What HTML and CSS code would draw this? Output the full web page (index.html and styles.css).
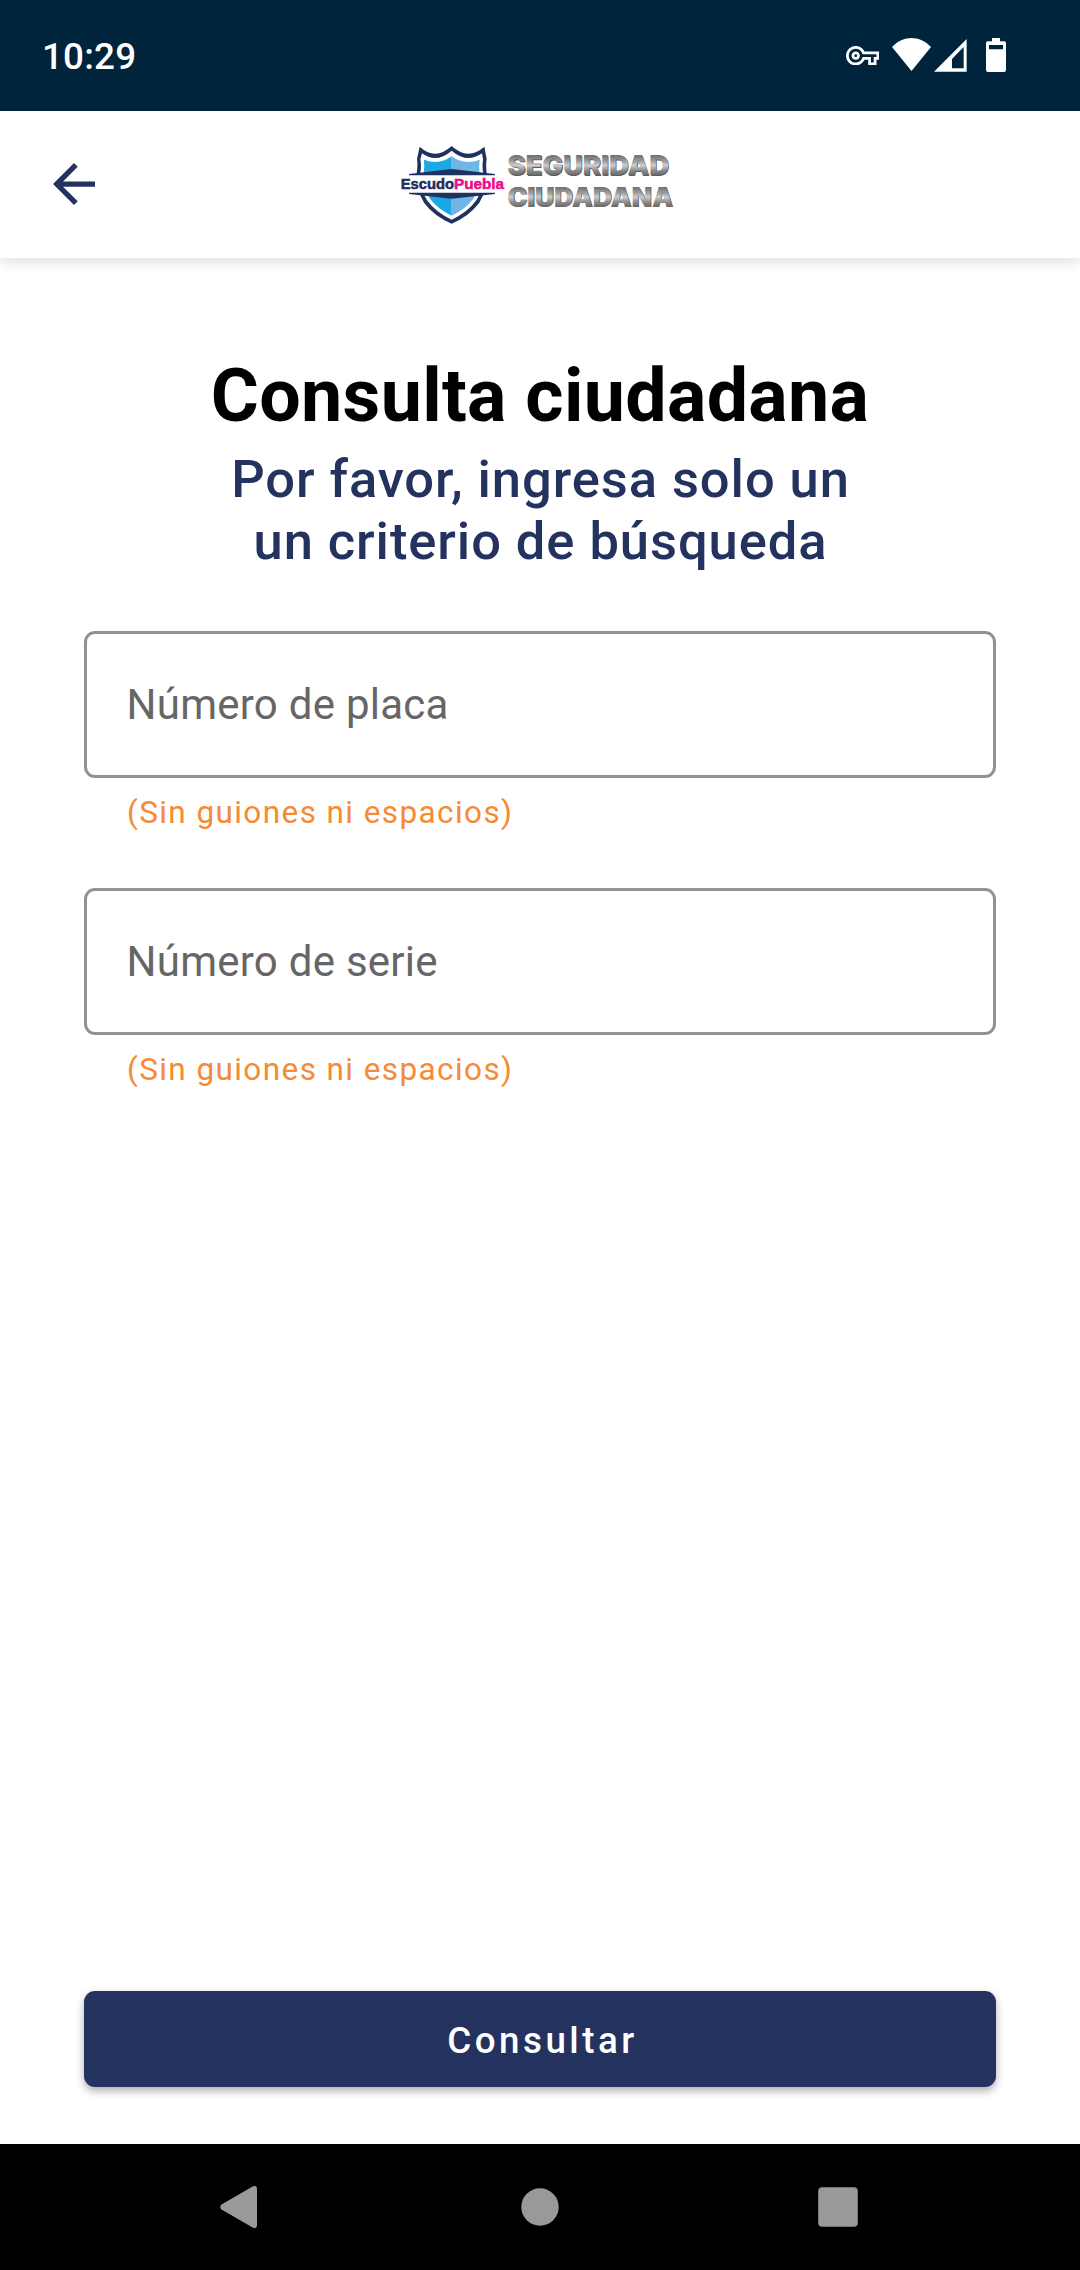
FILE: index.html
```html
<!DOCTYPE html>
<html lang="es">
<head>
<meta charset="utf-8">
<title>Consulta ciudadana</title>
<link rel="stylesheet" href="styles.css">
</head>
<body>
<div class="status-bar">
  <span class="clock">10:29</span>
  <div class="status-icons">
    <svg class="icon-key" viewBox="0 5 24 14"><path d="M22 19h-6v-4h-2.68c-1.14 2.42-3.6 4-6.32 4-3.86 0-7-3.14-7-7s3.14-7 7-7c2.72 0 5.17 1.58 6.32 4H24v6h-2v4zm-4-2h2v-4h2v-2H11.94l-.23-.67C11.01 8.34 9.11 7 7 7c-2.76 0-5 2.24-5 5s2.24 5 5 5c2.11 0 4.01-1.34 4.71-3.33l.23-.67H18v4zM7 15c-1.65 0-3-1.35-3-3s1.35-3 3-3 3 1.35 3 3-1.35 3-3 3zm0-4c-.55 0-1 .45-1 1s.45 1 1 1 1-.45 1-1-.45-1-1-1z"/></svg>
    <svg class="icon-wifi" viewBox="0 0 117 99"><path d="M58.500 99L0 27C34-9 83-9 117 27z"/></svg>
    <svg class="icon-signal" viewBox="0 0 99 99"><path fill-rule="evenodd" d="M0 98L98 0V98zM54 60V88H89V24z"/></svg>
    <svg class="icon-battery" viewBox="0 0 60 102"><path fill-rule="evenodd" d="M18 0H42V10H55Q60 10 60 15V96Q60 102 54 102H6Q0 102 0 96V15Q0 10 5 10H18zM9 21V34H51V21z"/></svg>
  </div>
</div>
<header class="app-bar">
  <svg class="back" viewBox="4 4 16 16"><path d="M20 11H7.830l5.590-5.590L12 4l-8 8 8 8 1.410-1.410L7.830 13H20z"/></svg>
  <svg class="logo" viewBox="30 42 831 249">
    <defs>
      <linearGradient id="steel" x1="0" y1="0" x2="0" y2="1">
        <stop offset=".2" stop-color="#727272"/><stop offset=".36" stop-color="#9a9a9a"/><stop offset=".5" stop-color="#cdcdcd"/><stop offset=".66" stop-color="#8c8c8c"/><stop offset=".82" stop-color="#666"/>
      </linearGradient>
    </defs>
    <path class="navy" d="M89 50Q136 93 185 48Q234 93 283 50L290 87Q287 103 290 130Q294 176 268 218Q238 258 185 281Q132 258 102 218Q76 176 80 130Q84 103 81 87z"/>
    <path class="white" d="M96 70Q139 102 185 62Q231 102 276 70L279 88Q276 105 279 130Q282 175 259 211Q232 248 185 269Q138 248 111 211Q88 175 91 130Q95 105 91 88z"/>
    <path class="cyan" d="M102 89Q147 107 185 79V257Q142 237 119 205Q99 170 101 130Q104 109 102 89z"/>
    <path class="sky" d="M269 89Q224 107 185 79V257Q229 237 251 205Q271 170 269 130Q266 109 269 89z"/>
    <path class="white" d="M30 137L185 130L340 137V187L185 196L30 187z"/>
    <path class="navy" d="M57 132L185 117L315 132V136H57zM57 188H315V192L185 206L57 192z"/>
    <text class="brand" x="32" y="178" textLength="160" lengthAdjust="spacingAndGlyphs">Escudo</text>
    <text class="brand brand-accent" x="192" y="178" textLength="150" lengthAdjust="spacingAndGlyphs">Puebla</text>
    <g class="steel-shade">
      <text x="355" y="137" textLength="484" lengthAdjust="spacingAndGlyphs">SEGURIDAD</text>
      <text x="355" y="232" textLength="496" lengthAdjust="spacingAndGlyphs">CIUDADANA</text>
    </g>
    <g class="steel">
      <text x="352" y="136" textLength="485" lengthAdjust="spacingAndGlyphs">SEGURIDAD</text>
      <text x="352" y="231" textLength="497" lengthAdjust="spacingAndGlyphs">CIUDADANA</text>
    </g>
  </svg>
</header>
<main class="content">
  <h1 class="title">Consulta ciudadana</h1>
  <p class="subtitle">Por favor, ingresa solo un<br>un criterio de búsqueda</p>
  <div class="field">Número de placa</div>
  <p class="hint">(Sin guiones ni espacios)</p>
  <div class="field">Número de serie</div>
  <p class="hint">(Sin guiones ni espacios)</p>
  <button class="submit">Consultar</button>
</main>
<nav class="nav-bar">
  <svg class="nav-icon" viewBox="0 0 42 42"><path d="M.5 18.500L32 .3Q36-1 36 3V39Q36 43 32 41.700L.5 23.500Q-2 21 .5 18.500z"/></svg>
  <svg class="nav-icon" viewBox="0 0 42 42"><circle cx="21" cy="21" r="18.700"/></svg>
  <svg class="nav-icon" viewBox="0 0 42 42"><rect x="1.200" y="1.200" width="39.600" height="39.600" rx="4"/></svg>
</nav>
</body>
</html>
```
FILE: styles.css
```css
* { box-sizing: border-box; }
body {
  margin: 0;
  width: 1080px;
  height: 2270px;
  display: flex;
  flex-direction: column;
  background: #fff;
  font-family: Roboto, sans-serif;
}
.status-bar {
  height: 111px;
  flex: none;
  display: flex;
  align-items: center;
  justify-content: space-between;
  padding: 0 74px 0 42px;
  background: #00243b;
}
.clock {
  padding-top: 1px;
  color: #fff;
  font-size: 36.750px;
  font-weight: 500;
  line-height: 43px;
  letter-spacing: .2px;
}
.status-icons { display: flex; align-items: center; fill: #fff; }
.icon-key { width: 33.300px; height: 19.400px; margin-right: 12.700px; }
.icon-wifi { width: 39px; height: 33px; margin: 0 3.500px 2px 0; }
.icon-signal { width: 33px; height: 33px; margin: 0 19.500px 1px -1px; }
.icon-battery { width: 20px; height: 34px; margin-bottom: 1px; }
.app-bar {
  height: 147px;
  flex: none;
  display: grid;
  grid-template-columns: 347px 277px;
  align-items: center;
  padding-left: 53px;
  background: #fff;
  box-shadow: 0 3px 14px rgba(0, 0, 0, .15);
}
.back { width: 42px; height: 42px; margin-bottom: 1px; fill: #24325f; }
.logo { width: 277px; height: 83px; margin-top: 2px; font-family: Inter, sans-serif; }
.navy { fill: #1e325f; }
.white { fill: #fff; }
.cyan { fill: #1ba8e5; }
.sky { fill: #70b5e7; }
.brand {
  font-family: "Liberation Sans", sans-serif;
  font-size: 44px;
  font-weight: 700;
  fill: #1e2b5c;
  stroke: #1e2b5c;
  stroke-width: 1.500px;
}
.brand-accent { fill: #ed0b8b; stroke: #ed0b8b; }
.steel, .steel-shade { font-size: 80px; font-weight: 900; }
.steel text { fill: url(#steel); }
.steel-shade text { fill: #5c5c5c; }
.content {
  flex: 1;
  display: flex;
  flex-direction: column;
  padding: 95px 84px 57px;
}
.title {
  margin: 0;
  font-size: 73.500px;
  font-weight: 700;
  line-height: 86px;
  letter-spacing: .330px;
  text-align: center;
  color: #000;
}
.subtitle {
  margin: 9px 0 59px;
  padding-left: 1px;
  font-size: 52.500px;
  font-weight: 500;
  line-height: 62px;
  letter-spacing: .930px;
  text-align: center;
  color: #24325f;
}
.field {
  height: 147px;
  display: flex;
  align-items: center;
  padding: 0 39.500px;
  border: 3px solid #929292;
  border-radius: 11px;
  font-size: 42px;
  letter-spacing: .260px;
  color: #666;
}
.hint {
  margin: 16px 43px 57px;
  font-size: 31.500px;
  line-height: 37px;
  letter-spacing: 1.410px;
  color: #f68a35;
}
.submit {
  height: 96px;
  margin-top: auto;
  padding: 2px 0 0 5px;
  border: 0;
  border-radius: 11px;
  background: #24325f;
  color: #fff;
  font: 500 36.750px Roboto, sans-serif;
  letter-spacing: 3.480px;
  box-shadow: 0 4px 8px rgba(0, 0, 0, .32);
}
.nav-bar {
  height: 126px;
  flex: none;
  display: flex;
  align-items: center;
  justify-content: center;
  gap: 256px;
  background: #000;
  fill: #999;
}
.nav-icon { width: 42px; height: 42px; overflow: visible; }
```
